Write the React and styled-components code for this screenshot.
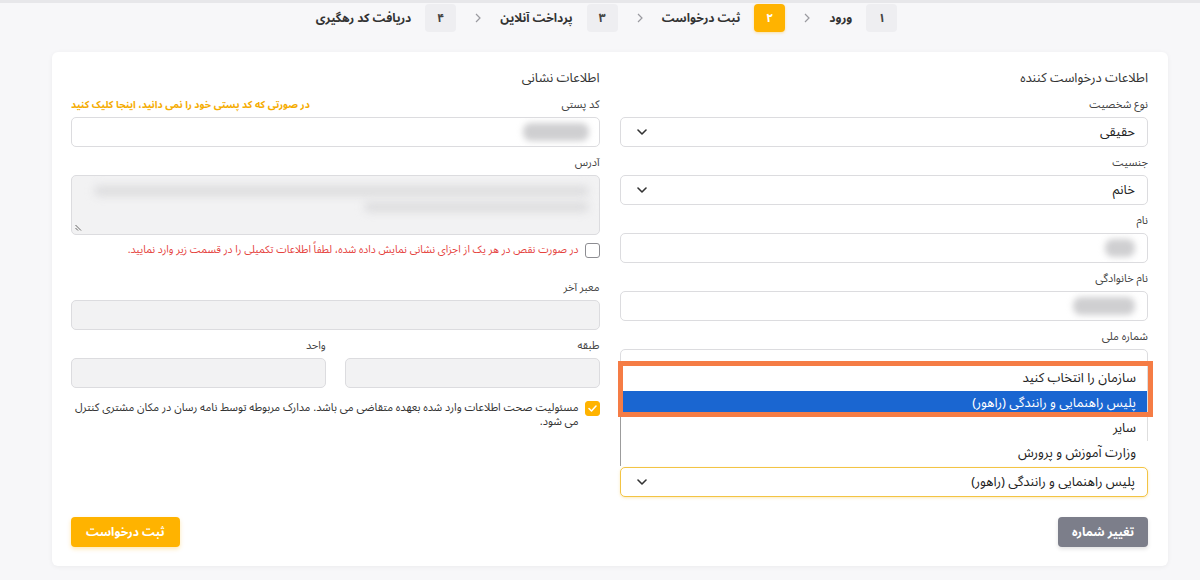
import React from 'react';
import styled, { createGlobalStyle } from 'styled-components';

const Global = createGlobalStyle`
  html, body { margin: 0; padding: 0; background: #f7f7f9; }
  body { font-family: "Noto Sans Arabic", "Vazirmatn", "DejaVu Sans", sans-serif; color: #333; }
  * { box-sizing: border-box; }
`;

const Page = styled.div`
  direction: rtl;
  min-height: 580px;
  border-top: 3px solid #e7e7ea;
  padding: 1px 32px 14px 52px;
`;

const Stepper = styled.div`
  display: flex;
  justify-content: center;
  align-items: center;
  height: 28px;
  gap: 19px;
  padding-right: 7px;
`;

const Step = styled.div`
  display: flex;
  align-items: center;
  gap: 14px;
`;

const StepNum = styled.div`
  width: 31px;
  height: 28px;
  border-radius: 4px;
  display: flex;
  align-items: center;
  justify-content: center;
  font-size: 12px;
  font-weight: 700;
  background: ${p => (p.$active ? '#ffb300' : '#eeeef1')};
  color: ${p => (p.$active ? '#fff' : '#444')};
  box-shadow: ${p => (p.$active ? '0 1px 3px rgba(255,179,0,.35)' : 'none')};
`;

const StepText = styled.span`
  font-size: 12px;
  font-weight: 700;
  color: #333;
  white-space: nowrap;
`;

const Chevron = styled.svg`
  width: 6px;
  height: 10px;
  flex: none;
`;

const Card = styled.div`
  margin-top: 20px;
  background: #fff;
  border-radius: 6px;
  box-shadow: 0 1px 5px rgba(0, 0, 0, 0.05);
  padding: 16px 20px 19px 19px;
`;

const Columns = styled.div`
  display: grid;
  grid-template-columns: 1fr 1fr;
  column-gap: 20px;
  align-items: start;
`;

const Column = styled.div`
  display: flex;
  flex-direction: column;
`;

const Heading = styled.h3`
  margin: 0 0 9px;
  font-size: 13px;
  line-height: 20px;
  font-weight: 400;
  color: #333;
`;

const Field = styled.div`
  display: flex;
  flex-direction: column;
  gap: 4px;
  margin-top: ${p => p.$top || 0}px;
  margin-bottom: ${p => (p.$last ? 0 : 8)}px;
`;

const LabelRow = styled.div`
  display: flex;
  justify-content: space-between;
  align-items: center;
`;

const Label = styled.label`
  font-size: 11px;
  line-height: 16px;
  color: #444;
`;

const HelpLink = styled.a`
  font-size: 10px;
  line-height: 16px;
  font-weight: 700;
  color: #f5ac00;
  cursor: pointer;
`;

const Box = styled.div`
  height: ${p => p.$h || 30}px;
  border: 1px solid ${p => (p.$focus ? '#f3c444' : '#dcdcdf')};
  border-radius: 5px;
  background: ${p => (p.$disabled ? '#f2f2f3' : '#fff')};
  display: flex;
  align-items: center;
  justify-content: space-between;
  padding: 0 12px 0 16px;
  font-size: 13px;
  color: #222;
  position: relative;
  overflow: hidden;
  box-shadow: ${p => (p.$focus ? '0 1px 3px rgba(243,196,68,.35)' : 'none')};
`;

const Blob = styled.span`
  display: block;
  width: ${p => p.$w}px;
  height: ${p => p.$h || 16}px;
  background: ${p => p.$c || '#cfcfd1'};
  border-radius: 8px;
  filter: blur(3px);
  margin-right: ${p => p.$r || 0}px;
`;

const AreaBox = styled(Box)`
  flex-direction: column;
  align-items: stretch;
  justify-content: flex-start;
  padding: 10px 10px 0 10px;
  gap: 6px;
`;

const BlurLine = styled.span`
  display: block;
  height: 10px;
  width: ${p => p.$w}px;
  background: #dcdcde;
  border-radius: 5px;
  filter: blur(4px);
`;

const Grip = styled.svg`
  position: absolute;
  left: 3px;
  bottom: 3px;
  width: 7px;
  height: 7px;
`;

const Caret = styled.svg`
  width: 10px;
  height: 6px;
  flex: none;
`;

const SelectWrap = styled.div`
  position: relative;
`;

const Listbox = styled.div`
  position: absolute;
  bottom: calc(100% + 1px);
  left: 0;
  right: 0;
  background: #fff;
  border-left: 1px solid #9c9c9c;
  z-index: 2;
`;

const Option = styled.div`
  height: 25px;
  line-height: 25px;
  padding-right: 11px;
  font-size: 13px;
  color: ${p => (p.$active ? '#fff' : '#222')};
  background: ${p => (p.$active ? '#1a66d1' : '#fff')};
  border-right: 1px solid ${p => (p.$edge ? '#dedede' : 'transparent')};
`;

const Highlight = styled.div`
  position: absolute;
  top: -5px;
  left: -3px;
  right: -5px;
  height: 56px;
  border: 5px solid #f57c45;
  pointer-events: none;
`;

const CheckRow = styled.label`
  display: flex;
  align-items: flex-start;
  gap: 6px;
  margin: ${p => p.$m || '0'};
  font-size: ${p => p.$fs || 11}px;
  line-height: 14px;
  color: ${p => (p.$error ? '#e5423d' : '#333')};
`;

const CheckBox = styled.span`
  flex: none;
  width: 15px;
  height: 15px;
  border-radius: 3px;
  border: 1.5px solid ${p => (p.$checked ? '#ffb300' : '#8d8d92')};
  background: ${p => (p.$checked ? '#ffb300' : '#fff')};
  display: flex;
  align-items: center;
  justify-content: center;
`;

const Pair = styled.div`
  display: grid;
  grid-template-columns: 1fr 1fr;
  column-gap: 19px;
`;

const Footer = styled.div`
  margin-top: 20px;
  display: flex;
  justify-content: space-between;
  align-items: center;
`;

const Button = styled.button`
  height: 30px;
  padding: 0 ${p => p.$px || 16}px;
  border: none;
  border-radius: 4px;
  font-family: inherit;
  font-size: 12px;
  font-weight: 700;
  color: #fff;
  background: ${p => (p.$tone === 'grey' ? '#7c7e8a' : '#ffb300')};
  box-shadow: 0 2px 4px ${p => (p.$tone === 'grey' ? 'rgba(0,0,0,.12)' : 'rgba(255,179,0,.3)')};
  cursor: pointer;
`;

const ChevronNext = () => (
  <Chevron viewBox="0 0 6 10">
    <polyline points="1,1 5,5 1,9" fill="none" stroke="#9a9aa0" strokeWidth="1.2" />
  </Chevron>
);

const CaretDown = () => (
  <Caret viewBox="0 0 10 6">
    <polyline points="1,1 5,5 9,1" fill="none" stroke="#333" strokeWidth="1.6" strokeLinecap="round" strokeLinejoin="round" />
  </Caret>
);

const Select = ({ value, focus }) => (
  <Box $focus={focus}>
    <span>{value}</span>
    <CaretDown />
  </Box>
);

const steps = [
  { n: '۱', t: 'ورود' },
  { n: '۲', t: 'ثبت درخواست', active: true },
  { n: '۳', t: 'پرداخت آنلاین' },
  { n: '۴', t: 'دریافت کد رهگیری' },
];

export default function App() {
  return (
    <>
      <Global />
      <Page>
        <Stepper>
          {steps.map((s, i) => (
            <React.Fragment key={s.n}>
              {i > 0 && <ChevronNext />}
              <Step>
                <StepNum $active={s.active}>{s.n}</StepNum>
                <StepText>{s.t}</StepText>
              </Step>
            </React.Fragment>
          ))}
        </Stepper>

        <Card>
          <Columns>
            <Column>
              <Heading>اطلاعات درخواست کننده</Heading>
              <Field>
                <Label>نوع شخصیت</Label>
                <Select value="حقیقی" />
              </Field>
              <Field>
                <Label>جنسیت</Label>
                <Select value="خانم" />
              </Field>
              <Field>
                <Label>نام</Label>
                <Box>
                  <Blob $w={30} $h={18} />
                </Box>
              </Field>
              <Field>
                <Label>نام خانوادگی</Label>
                <Box>
                  <Blob $w={62} $h={18} />
                </Box>
              </Field>
              <Field>
                <Label>شماره ملی</Label>
                <Box />
              </Field>
              <Field $top={80} $last>
                <SelectWrap>
                  <Listbox>
                    <Option $edge>سازمان را انتخاب کنید</Option>
                    <Option $edge $active>پلیس راهنمایی و رانندگی (راهور)</Option>
                    <Option $edge>سایر</Option>
                    <Option>وزارت آموزش و پرورش</Option>
                    <Highlight />
                  </Listbox>
                  <Select value="پلیس راهنمایی و رانندگی (راهور)" focus />
                </SelectWrap>
              </Field>
            </Column>

            <Column>
              <Heading>اطلاعات نشانی</Heading>
              <Field>
                <LabelRow>
                  <Label>کد پستی</Label>
                  <HelpLink>در صورتی که کد پستی خود را نمی دانید، اینجا کلیک کنید</HelpLink>
                </LabelRow>
                <Box>
                  <Blob $w={66} $h={18} $r={-2} />
                </Box>
              </Field>
              <Field>
                <Label>آدرس</Label>
                <AreaBox $h={60} $disabled>
                  <BlurLine $w={495} />
                  <BlurLine $w={225} />
                  <Grip viewBox="0 0 7 7">
                    <line x1="0.5" y1="1" x2="6" y2="6.5" stroke="#555" strokeWidth="0.9" />
                    <line x1="0.5" y1="4" x2="3" y2="6.5" stroke="#555" strokeWidth="0.9" />
                  </Grip>
                </AreaBox>
              </Field>
              <CheckRow $error $fs={10.5} $m="0 0 22px">
                <CheckBox />
                <span>در صورت نقص در هر یک از اجزای نشانی نمایش داده شده، لطفاً اطلاعات تکمیلی را در قسمت زیر وارد نمایید.</span>
              </CheckRow>
              <Field>
                <Label>معبر آخر</Label>
                <Box $disabled />
              </Field>
              <Pair>
                <Field>
                  <Label>طبقه</Label>
                  <Box $disabled />
                </Field>
                <Field>
                  <Label>واحد</Label>
                  <Box $disabled />
                </Field>
              </Pair>
              <CheckRow $fs={11} $m="5px 0 0">
                <CheckBox $checked>
                  <svg width="9" height="7" viewBox="0 0 9 7">
                    <polyline points="1,3.5 3.5,6 8,1" fill="none" stroke="#fff" strokeWidth="1.5" strokeLinecap="round" strokeLinejoin="round" />
                  </svg>
                </CheckBox>
                <span>مسئولیت صحت اطلاعات وارد شده بعهده متقاضی می باشد. مدارک مربوطه توسط نامه رسان در مکان مشتری کنترل می شود.</span>
              </CheckRow>
            </Column>
          </Columns>
          <Footer>
            <Button $tone="grey" $px={14}>تغییر شماره</Button>
            <Button $px={15}>ثبت درخواست</Button>
          </Footer>
        </Card>
      </Page>
    </>
  );
}
